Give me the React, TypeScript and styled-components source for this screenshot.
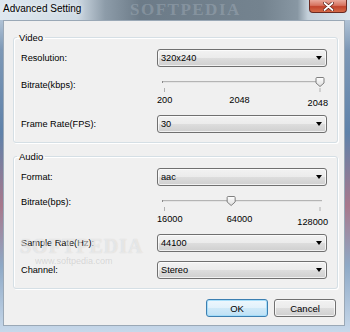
import React from 'react';
import styled, { createGlobalStyle } from 'styled-components';

const GlobalStyle = createGlobalStyle`
  html, body {
    margin: 0;
    padding: 0;
  }
  body {
    width: 350px;
    height: 332px;
    overflow: hidden;
    font-family: "Liberation Sans", Arial, sans-serif;
    font-size: 9.2px;
    color: #000;
  }
`;

const Window = styled.div`
  position: relative;
  width: 350px;
  height: 332px;
  display: flex;
  flex-direction: column;
  background: linear-gradient(
    180deg,
    #d3dfea 0%,
    #7d98b6 15%,
    #5f82aa 40%,
    #a8788c 62%,
    #8ea9c6 80%,
    #c7d8ea 100%
  );
  overflow: hidden;
`;

const TitleBar = styled.div`
  position: relative;
  height: 20px;
  flex: none;
  display: flex;
  justify-content: space-between;
  align-items: flex-start;
  background: linear-gradient(
    90deg,
    #dfe8f0 0%,
    #cfdae4 22%,
    #8d9ca9 30%,
    #6c7b88 40%,
    #74838f 75%,
    #8897a3 85%,
    #c4d0da 88%,
    #dbe4ec 100%
  );
`;

const Title = styled.div`
  font-size: 10px;
  line-height: 14px;
  padding: 2px 0 0 3px;
  color: #000;
  text-shadow: 0 0 5px rgba(255, 255, 255, 0.9);
`;

const TitleWatermark = styled.div`
  position: absolute;
  left: 130px;
  top: 0;
  height: 20px;
  font-family: "Liberation Serif", serif;
  font-weight: bold;
  font-size: 17px;
  line-height: 20px;
  letter-spacing: 1.5px;
  color: rgba(190, 200, 210, 0.3);
  pointer-events: none;
`;

const CloseButton = styled.div`
  width: 38px;
  height: 13px;
  margin-right: 3px;
  box-sizing: border-box;
  border: 1px solid #6a2a22;
  border-top: none;
  border-radius: 0 0 4px 4px;
  background: linear-gradient(180deg, #e9a99c 0%, #d7735f 45%, #c2442c 55%, #d56a48 100%);
  display: flex;
  align-items: center;
  justify-content: center;
`;

const Client = styled.div`
  flex: 1;
  margin: 0 5px 6px 3px;
  background: #f0f0f0;
  border: 1px solid #9aa8b6;
  padding: 10px 6px 0 9px;
  display: flex;
  flex-direction: column;
`;

const Group = styled.fieldset<{ $top: number }>`
  margin: ${(p) => p.$top}px 0 0 0;
  padding: 5px 10px 9px 7px;
  border: 1px solid #d5dfe5;
  border-radius: 3px;
  box-shadow: inset 1px 1px 0 #fff, 1px 1px 0 #fff;
  min-width: 0;
`;

const Legend = styled.legend`
  margin-left: -4px;
  padding: 0 2px;
  line-height: 13px;
  font-size: 9.5px;
`;

const Row = styled.div<{ $height: number; $gap?: number }>`
  display: grid;
  grid-template-columns: 136px 170px;
  height: ${(p) => p.$height}px;
  margin-top: ${(p) => p.$gap ?? 0}px;
`;

const Label = styled.div<{ $offset?: number }>`
  line-height: 13px;
  align-self: ${(p) => (p.$offset !== undefined ? 'start' : 'center')};
  margin-top: ${(p) => p.$offset ?? 0}px;
`;

const Combo = styled.div`
  box-sizing: border-box;
  height: 18px;
  border: 1px solid #707070;
  border-radius: 3px;
  background: linear-gradient(180deg, #f2f2f2 0%, #ebebeb 50%, #dddddd 51%, #cfcfcf 100%);
  box-shadow: inset 0 0 0 1px rgba(255, 255, 255, 0.7);
  display: flex;
  align-items: center;
  justify-content: space-between;
  padding: 0 4px 0 3px;
  line-height: 13px;
`;

const Arrow = styled.span`
  width: 0;
  height: 0;
  border-left: 3.5px solid transparent;
  border-right: 3.5px solid transparent;
  border-top: 4px solid #000;
`;

const SliderBox = styled.div`
  display: flex;
  flex-direction: column;
`;

const Scale = styled.div`
  display: grid;
  grid-template-columns: 1fr auto 1fr;
  line-height: 13px;
`;

const ScaleMin = styled.span`
  justify-self: start;
`;

const ScaleMid = styled.span`
  justify-self: center;
  margin-right: 5px;
`;

const ScaleMax = styled.span`
  justify-self: end;
  margin-right: -1px;
  padding-top: 3px;
`;

const ButtonRow = styled.div`
  display: flex;
  justify-content: flex-end;
  gap: 6px;
  margin: 10px 2px 0 0;
`;

const Button = styled.div<{ $default?: boolean }>`
  box-sizing: border-box;
  width: 62px;
  height: 18px;
  border: 1px solid ${(p) => (p.$default ? '#3c7fb1' : '#707070')};
  border-radius: 3px;
  background: ${(p) =>
    p.$default
      ? 'linear-gradient(180deg, #eef7fd 0%, #e1f1fb 50%, #cfe9f8 51%, #bfe1f5 100%)'
      : 'linear-gradient(180deg, #f2f2f2 0%, #ebebeb 50%, #dddddd 51%, #cfcfcf 100%)'};
  box-shadow: inset 0 0 0 1px ${(p) => (p.$default ? 'rgba(160, 220, 250, 0.9)' : 'rgba(255, 255, 255, 0.7)')};
  display: flex;
  align-items: center;
  justify-content: center;
  line-height: 13px;
  font-size: 9.5px;
`;

const Watermark = styled.div`
  position: absolute;
  left: 20px;
  top: 236px;
  font-family: "Liberation Serif", serif;
  font-weight: bold;
  font-size: 20px;
  line-height: 20px;
  letter-spacing: 1px;
  color: rgba(255, 255, 255, 0.5);
  text-shadow: 0 0 1px rgba(120, 120, 120, 0.3);
  pointer-events: none;
`;

const WatermarkUrl = styled.div`
  position: absolute;
  left: 35px;
  top: 257px;
  font-size: 9px;
  line-height: 9px;
  color: rgba(150, 150, 150, 0.3);
  pointer-events: none;
`;

type SliderProps = { min: string; mid: string; max: string; fraction: number };

const Slider = ({ min, mid, max, fraction }: SliderProps) => {
  const left = 7.5;
  const right = 163;
  const cx = left + (right - left) * fraction;
  return (
    <SliderBox>
      <svg width="170" height="27" viewBox="0 0 170 27">
        <defs>
          <linearGradient id="thumbFill" x1="0" y1="0" x2="0" y2="1">
            <stop offset="0" stopColor="#ffffff" />
            <stop offset="1" stopColor="#dcdcdc" />
          </linearGradient>
        </defs>
        <rect x="5" y="14" width="160" height="1" fill="#b4b4b4" />
        <rect x="5" y="15" width="160" height="1" fill="#e4e4e4" />
        <rect x="5" y="14" width="1" height="2" fill="#8a8a8a" />
        <rect x={left - 0.5} y="21" width="1" height="4" fill="#b0b0b0" />
        <rect x={right - 0.5} y="21" width="1" height="4" fill="#b0b0b0" />
        <path
          d={`M ${cx - 3} 10.5 h 6 a 1 1 0 0 1 1 1 v 4.5 l -4 3.5 l -4 -3.5 v -4.5 a 1 1 0 0 1 1 -1 z`}
          fill="url(#thumbFill)"
          stroke="#7f7f7f"
          strokeWidth="1"
        />
      </svg>
      <Scale>
        <ScaleMin>{min}</ScaleMin>
        <ScaleMid>{mid}</ScaleMid>
        <ScaleMax>{max}</ScaleMax>
      </Scale>
    </SliderBox>
  );
};

const ComboBox = ({ value }: { value: string }) => (
  <Combo>
    <span>{value}</span>
    <Arrow />
  </Combo>
);

const App = () => {
  return (
    <>
      <GlobalStyle />
      <Window>
        <TitleBar>
          <Title>Advanced Setting</Title>
          <TitleWatermark>SOFTPEDIA</TitleWatermark>
          <CloseButton>
            <svg width="11" height="9" viewBox="0 0 11 9">
              <path d="M1.5 1 L9.5 8 M9.5 1 L1.5 8" stroke="#5a1d14" strokeWidth="3.2" strokeLinecap="round" />
              <path d="M1.5 1 L9.5 8 M9.5 1 L1.5 8" stroke="#ffffff" strokeWidth="1.8" strokeLinecap="round" />
            </svg>
          </CloseButton>
        </TitleBar>
        <Client>
          <Group $top={0}>
            <Legend>Video</Legend>
            <Row $height={18}>
              <Label>Resolution:</Label>
              <ComboBox value="320x240" />
            </Row>
            <Row $height={48}>
              <Label $offset={12}>Bitrate(kbps):</Label>
              <Slider min="200" mid="2048" max="2048" fraction={1} />
            </Row>
            <Row $height={18}>
              <Label>Frame Rate(FPS):</Label>
              <ComboBox value="30" />
            </Row>
          </Group>
          <Group $top={7}>
            <Legend>Audio</Legend>
            <Row $height={18}>
              <Label>Format:</Label>
              <ComboBox value="aac" />
            </Row>
            <Row $height={48}>
              <Label $offset={10}>Bitrate(bps):</Label>
              <Slider min="16000" mid="64000" max="128000" fraction={48000 / 112000} />
            </Row>
            <Row $height={18}>
              <Label>Sample Rate(Hz):</Label>
              <ComboBox value="44100" />
            </Row>
            <Row $height={18} $gap={9}>
              <Label>Channel:</Label>
              <ComboBox value="Stereo" />
            </Row>
          </Group>
          <ButtonRow>
            <Button $default>OK</Button>
            <Button>Cancel</Button>
          </ButtonRow>
        </Client>
        <Watermark>SOFTPEDIA</Watermark>
        <WatermarkUrl>www.softpedia.com</WatermarkUrl>
      </Window>
    </>
  );
};

export default App;
